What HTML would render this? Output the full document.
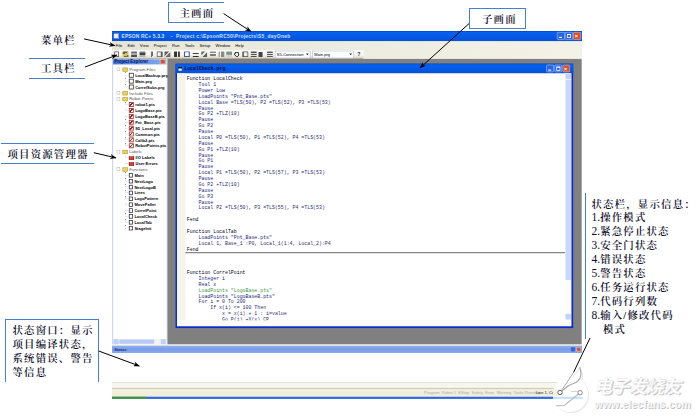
<!DOCTYPE html>
<html lang="zh-CN">
<head>
<meta charset="utf-8">
<title>EPSON RC+ 界面说明</title>
<style>
html,body{margin:0;padding:0;background:#fff;}
body{width:700px;height:420px;position:relative;overflow:hidden;font-family:"Liberation Sans","Noto Sans CJK SC",sans-serif;}
#clip{position:absolute;left:111.7px;top:31.4px;width:470px;height:367.5px;overflow:hidden;}
#ide{position:absolute;left:0;top:0;width:1280px;height:1002px;transform:scale(0.3672);transform-origin:0 0;background:#f3f1e6;font-size:11px;color:#000;overflow:hidden;}
#ide *{box-sizing:border-box;}
.abs{position:absolute;}
/* title */
.title{position:absolute;left:0;top:0;width:1280px;height:27.5px;background:linear-gradient(#0b3fc0,#0561ee 14%,#0458e4 60%,#0650d6);color:#d4e0fb;font:bold 13.33px "Liberation Sans",sans-serif;line-height:27px;}
.title .ico{position:absolute;left:4px;top:6px;width:15px;height:15px;background:#e8eefc;border:1px solid #123;}
.title .t1{position:absolute;left:26px;top:0;white-space:pre;letter-spacing:.4px;}
.title .t2{position:absolute;left:160px;top:0;white-space:pre;letter-spacing:.8px;}
.wb{position:absolute;top:3px;width:21px;height:21px;border:1px solid #fff;border-radius:3px;background:#2a66e0;}
.wb.x{background:#d8502c;}
.wb b{position:absolute;left:4px;top:12px;width:8px;height:3px;background:#fff;}
.wb.mx b{left:4px;top:4px;width:11px;height:11px;background:none;border:2px solid #fff;border-top-width:3px;}
.wb.x b{left:3px;top:2px;width:auto;height:auto;background:none;color:#fff;font:bold 15px "Liberation Sans",sans-serif;line-height:15px;}
/* menu */
.menu{position:absolute;left:0;top:27.5px;width:1280px;height:24px;background:linear-gradient(90deg,#e6e6d8,#f4f2e8);line-height:24px;white-space:pre;color:#000;}
.menu span{display:inline-block;padding:0 7px;font-size:11.3px}
.menu span:first-child{padding-left:10px}
.toolbar{position:absolute;left:0;top:51.5px;width:1280px;height:24.5px;background:linear-gradient(90deg,#e6e6d8,#f4f2e8);}
.strip{position:absolute;left:0;top:0;width:686px;height:24.5px;background:linear-gradient(#fcfbf8,#f6f4ee 55%,#e4e2d2 82%,#b4b29a 96%);border-radius:0 5px 5px 0;}
.tbi{position:absolute;top:4px;width:16px;height:15px;border-radius:1px;opacity:.85}
.combo{position:absolute;top:2px;height:20px;background:#fff;border:1px solid #7f9db9;line-height:18px;padding-left:4px;color:#000;white-space:pre;}
.combo:after{content:"";position:absolute;right:3px;top:6px;border:4px solid transparent;border-top:5px solid #333;}
/* explorer */
.exp{position:absolute;left:0;top:76px;width:152px;height:776.5px;background:#fff;border-left:3px solid #c9d6f3;border-right:4px solid #e6e9f3;}
.exp .cap{position:absolute;left:0;top:1px;width:145px;height:14px;background:linear-gradient(90deg,#3f74dc,#8aabee);color:#0a1560;font:bold 12px "Liberation Sans",sans-serif;line-height:14px;padding-left:3px;white-space:pre;}
.exp .cap i{position:absolute;right:3px;top:0px;width:14px;height:13px;background:#d8502c;border:1px solid #fff;border-radius:2px;}
.exp .tree{position:absolute;left:8px;top:21px;width:145px;overflow:hidden;}
.tr{position:relative;height:16px;line-height:16px;white-space:pre;color:#111;font-size:11.5px;}
.tr.r{color:#555;}
.tr.c{color:#000;font-weight:bold;font-size:11px;}
.pm{position:absolute;left:2px;top:3px;width:9px;height:9px;border:1px solid #999;background:#fff;}
.dl{position:absolute;left:25px;top:0;width:9px;height:8px;border-left:1px dotted #999;border-bottom:1px dotted #999;}
.ic{display:inline-block;width:14px;height:12px;margin-right:4px;vertical-align:-2px;}
.ic.fo,.ic.fc{background:#e8d060;border:1px solid #9a8420;height:11px;}
.ic.d{background:#fff;border:2px solid #222;width:13px;height:13px;}
.ic.p{background:linear-gradient(135deg,#fff 35%,#a01818 35% 60%,#fff 60%);border:2px solid #8a1c1c;width:13px;height:13px;}
.ic.l{background:#d04040;border:1px solid #600;height:9px;}
.ic.f{background:#fff;border:2px solid #223;width:11px;height:12px;}
.exp .hs{position:absolute;left:0;bottom:0;width:145px;height:14px;background:#f4f3ee;}
.exp .hs i{position:absolute;left:17px;top:1px;width:95px;height:12px;background:#b7caf5;border-radius:2px;}
.exp .hs b{position:absolute;top:0px;width:14px;height:14px;background:#c1d2f8;border-radius:2px;}
/* mdi */
.mdi{position:absolute;left:151px;top:76px;width:1128px;height:777px;background:#808080;}
.child{position:absolute;left:21.7px;top:12.8px;width:1083.3px;height:720.5px;background:#0a2cc8;}
.child .ct{position:absolute;left:0;top:0;width:100%;height:26.2px;background:linear-gradient(#0a54d8,#0561ee 25%,#0458e4 60%,#0650d6);color:#fff;font:bold 13px "Liberation Sans",sans-serif;line-height:30px;}
.child .ct .ico{position:absolute;left:7px;top:9px;width:11px;height:11px;background:#fff;border:1px solid #012;border-top:4px solid #012;}
.child .ct .t1{position:absolute;left:24px;top:0;white-space:pre;font:bold 13.33px "Liberation Mono",monospace;line-height:29px;color:#0a0a38;}
.child .ct .wb{top:3px;width:20px;height:20px;}
.child .body{position:absolute;left:4px;top:26.2px;right:4.5px;bottom:5px;background:#fff;overflow:hidden;}
.gut{position:absolute;left:0;top:0;width:23px;bottom:17px;background:#f5f4ea;}
.code{position:absolute;left:27px;top:8px;font:13.33px "Liberation Mono",monospace;}
.ln{height:16px;line-height:16px;white-space:pre;color:#000;}
.ln.f{color:#00001c;}
.ln.k{color:#24247c;}
.ln.m{color:#2c2c70;}
.ln.g{color:#3c9a3c;}
.sep{position:absolute;left:23px;right:17px;top:488px;height:2px;background:#333;}
.vs{position:absolute;right:0;top:0;width:17px;bottom:0;background:#fbfbf8;}
.vs i{position:absolute;left:1px;top:18px;width:15px;height:545px;background:#cad9fb;border-radius:2px;}
.vs b{position:absolute;left:1px;width:15px;height:15px;background:#c1d2f8;border-radius:2px;}
.hs2{position:absolute;left:0;right:17px;bottom:0;height:16px;background:#fbfbf7;}
/* status window */
.swt{position:absolute;left:0;top:857px;width:1280px;height:20px;background:linear-gradient(#8fb0f0,#7a9be8 50%,#88a8ee);color:#1a2f70;font:bold 11px "Liberation Sans",sans-serif;line-height:20px;padding-left:6px;}
.swt i{position:absolute;right:3px;top:4px;width:12px;height:12px;background:#d8502c;border:1px solid #fff;border-radius:2px;}
.swt b{position:absolute;right:19px;top:4px;width:11px;height:12px;background:#3a66d0;border-radius:2px;}
.sw{position:absolute;left:0;top:877px;width:1280px;height:79px;background:#fff;}
.sb0{position:absolute;left:0;top:956px;width:1280px;height:17px;background:#f6f6ee;border-top:2px solid #dcdcd4;}
.sbl{position:absolute;left:0;top:972px;width:1280px;height:3px;background:#cfcbb9;}
.sb{position:absolute;left:0;top:975px;width:1280px;height:21px;background:#f1efdc;color:#aaa;line-height:19px;white-space:pre;}
.sb span{position:absolute;top:0;}
.task{position:absolute;left:0;top:995.5px;width:1280px;height:6px;background:#2f6ae0;}
.task i{position:absolute;left:0;top:0;width:94px;height:6px;background:#3f9a3f;}
/* annotations */
.an{position:absolute;font-family:"Liberation Serif","Noto Serif CJK SC",serif;font-weight:600;font-size:10.4px;letter-spacing:1.2px;line-height:13.9px;color:#0c0c28;white-space:pre;}
.an .n{font-weight:400;letter-spacing:0;font-size:11.5px;}
.bl{position:absolute;background:#4a7fd0;}
#wm{position:absolute;left:0;top:0;}
</style>
</head>
<body>
<div id="clip"><div id="ide">
  <div class="title"><i class="ico"></i><span class="t1">EPSON RC+ 5.3.3</span><span class="t2">-  Project c:\EpsonRC50\Projects\S5_dayOneb</span>
    <div class="wb mn" style="left:1212px"><b></b></div><div class="wb mx" style="left:1234px"><b></b></div><div class="wb x" style="left:1256px"><b>×</b></div>
  </div>
  <div class="menu"><span>File</span><span>Edit</span><span>View</span><span>Project</span><span>Run</span><span>Tools</span><span>Setup</span><span>Window</span><span>Help</span></div>
  <div class="toolbar"><div class="strip"></div><i class="tbi" style="left:6.4px;background:#fff;border:2px solid #333;width:13px"></i><i class="tbi" style="left:29.3px;background:linear-gradient(160deg,#443 35%,#d8b838 35% 70%,#554 70%)"></i><i class="tbi" style="left:52.2px;background:linear-gradient(#555 30%,#999 30% 60%,#333 60%)"></i><i class="tbi" style="left:74.5px;background:linear-gradient(#667 35%,#222 35% 65%,#aaa 65%)"></i><i class="tbi" style="left:101.2px;background:linear-gradient(100deg,#fff0 35%,#555 35% 60%,#fff0 60%)"></i><i class="tbi" style="left:122.2px;background:#eee;border:2px solid #444;border-right-width:5px"></i><i class="tbi" style="left:143.1px;background:linear-gradient(135deg,#444 40%,#ccc 40% 60%,#555 60%)"></i><i class="tbi" style="left:169.3px;background:linear-gradient(90deg,#111 45%,#eee 45% 65%,#222 65%)"></i><i class="tbi" style="left:195.7px;background:#fff;border:3px solid #2a3f9a;border-top-width:2px"></i><i class="tbi" style="left:220.2px;background:linear-gradient(#fff0 20%,#222 20% 45%,#eee 45% 75%,#111 75%)"></i><i class="tbi" style="left:243.4px;background:linear-gradient(135deg,#555 30%,#ddd 30% 55%,#353 55%)"></i><i class="tbi" style="left:266.5px;background:linear-gradient(#777 25%,#eee 25% 50%,#666 50% 75%,#ddd 75%)"></i><i class="tbi" style="left:289.7px;background:linear-gradient(90deg,#999 30%,#eee 30% 50%,#777 50%)"></i><i class="tbi" style="left:311.4px;background:linear-gradient(#686 40%,#888 40% 70%,#ccc 70%)"></i><i class="tbi" style="left:331.6px;background:radial-gradient(#eee 35%,#222 40% 60%,#fff0 65%)"></i><i class="tbi" style="left:355.0px;background:#eee;border:2px solid #333;border-left-width:4px"></i><i class="tbi" style="left:378.4px;background:linear-gradient(#333 20%,#ddd 20% 40%,#333 40% 60%,#ddd 60% 80%,#333 80%)"></i><i class="tbi" style="left:398.6px;background:linear-gradient(#fff0 15%,#223 15% 90%,#fff0 90%);width:11px"></i><i class="tbi" style="left:422.0px;background:linear-gradient(#444 20%,#ddd 20% 40%,#444 40% 60%,#ddd 60% 80%,#444 80%)"></i>
    <div class="combo" style="left:444px;width:96px">S5-Connection</div>
    <div class="combo" style="left:546px;width:112px">Main.prg</div>
    <span class="abs" style="left:668px;top:3px;font:bold 14px 'Liberation Sans',sans-serif;color:#223">?</span>
  </div>
  <div class="exp">
    <div class="cap">Project Explorer<i></i></div>
    <div class="tree">
<div class="tr r" style="padding-left:18px"><u class="pm"></u><i class="ic fo"></i>Program Files</div>
<div class="tr c" style="padding-left:35px"><u class="dl"></u><i class="ic d"></i>LocalBackup.prg</div>
<div class="tr c" style="padding-left:35px"><u class="dl"></u><i class="ic d"></i>Main.prg</div>
<div class="tr c" style="padding-left:35px"><u class="dl"></u><i class="ic d"></i>CorrelSubs.prg</div>
<div class="tr r" style="padding-left:18px"><u class="pm"></u><i class="ic fc"></i>Include Files</div>
<div class="tr r" style="padding-left:18px"><u class="pm"></u><i class="ic fo"></i>Robot Points</div>
<div class="tr c" style="padding-left:35px"><u class="dl"></u><i class="ic p"></i>robot1.pts</div>
<div class="tr c" style="padding-left:35px"><u class="dl"></u><i class="ic p"></i>LogoBase.pts</div>
<div class="tr c" style="padding-left:35px"><u class="dl"></u><i class="ic p"></i>LogoBaseB.pts</div>
<div class="tr c" style="padding-left:35px"><u class="dl"></u><i class="ic p"></i>Pnt_Base.pts</div>
<div class="tr c" style="padding-left:35px"><u class="dl"></u><i class="ic p"></i>S5_Local.pts</div>
<div class="tr c" style="padding-left:35px"><u class="dl"></u><i class="ic p"></i>Common.pts</div>
<div class="tr c" style="padding-left:35px"><u class="dl"></u><i class="ic p"></i>Calib2.pts</div>
<div class="tr c" style="padding-left:35px"><u class="dl"></u><i class="ic p"></i>RobotPoints.pts</div>
<div class="tr r" style="padding-left:18px"><u class="pm"></u><i class="ic fo"></i>Labels</div>
<div class="tr c" style="padding-left:35px"><u class="dl"></u><i class="ic l"></i>I/O Labels</div>
<div class="tr c" style="padding-left:35px"><u class="dl"></u><i class="ic l"></i>User Errors</div>
<div class="tr r" style="padding-left:18px"><u class="pm"></u><i class="ic fo"></i>Functions</div>
<div class="tr c" style="padding-left:35px"><u class="dl"></u><i class="ic f"></i>Main</div>
<div class="tr c" style="padding-left:35px"><u class="dl"></u><i class="ic f"></i>NextLogo</div>
<div class="tr c" style="padding-left:35px"><u class="dl"></u><i class="ic f"></i>NextLogoB</div>
<div class="tr c" style="padding-left:35px"><u class="dl"></u><i class="ic f"></i>Lines</div>
<div class="tr c" style="padding-left:35px"><u class="dl"></u><i class="ic f"></i>LogoPattern</div>
<div class="tr c" style="padding-left:35px"><u class="dl"></u><i class="ic f"></i>MovePallet</div>
<div class="tr c" style="padding-left:35px"><u class="dl"></u><i class="ic f"></i>CorrelPoint</div>
<div class="tr c" style="padding-left:35px"><u class="dl"></u><i class="ic f"></i>LocalCheck</div>
<div class="tr c" style="padding-left:35px"><u class="dl"></u><i class="ic f"></i>LocalTab</div>
<div class="tr c" style="padding-left:35px"><u class="dl"></u><i class="ic f"></i>StageInit</div>

    </div>
    <div class="hs"><b style="left:1px"></b><i></i><b style="right:1px"></b></div>
  </div>
  <div class="mdi">
    <div class="child">
      <div class="ct"><i class="ico"></i><span class="t1">LocalCheck.prg</span>
        <div class="wb mn" style="left:1010px"><b></b></div><div class="wb mx" style="left:1032px"><b></b></div><div class="wb x" style="left:1054px"><b>×</b></div>
      </div>
      <div class="body">
        <div class="gut"></div>
        <div class="code">
<div class="ln f" style="padding-left:0px">Function LocalCheck</div>
<div class="ln k" style="padding-left:32px">Tool 1</div>
<div class="ln k" style="padding-left:32px">Power Low</div>
<div class="ln k" style="padding-left:32px">LoadPoints "Pnt_Base.pts"</div>
<div class="ln m" style="padding-left:32px">Local Base =TLS(50), P2 =TLS(52), P3 =TLS(53)</div>
<div class="ln k" style="padding-left:32px">Pause</div>
<div class="ln m" style="padding-left:32px">Go P2 +TLZ(10)</div>
<div class="ln k" style="padding-left:32px">Pause</div>
<div class="ln m" style="padding-left:32px">Go P2</div>
<div class="ln k" style="padding-left:32px">Pause</div>
<div class="ln m" style="padding-left:32px">Local P0 =TLS(50), P1 =TLS(52), P4 =TLS(53)</div>
<div class="ln k" style="padding-left:32px">Pause</div>
<div class="ln m" style="padding-left:32px">Go P1 +TLZ(10)</div>
<div class="ln k" style="padding-left:32px">Pause</div>
<div class="ln m" style="padding-left:32px">Go P1</div>
<div class="ln k" style="padding-left:32px">Pause</div>
<div class="ln m" style="padding-left:32px">Local P1 =TLS(50), P2 =TLS(57), P3 =TLS(53)</div>
<div class="ln k" style="padding-left:32px">Pause</div>
<div class="ln m" style="padding-left:32px">Go P2 +TLZ(10)</div>
<div class="ln k" style="padding-left:32px">Pause</div>
<div class="ln m" style="padding-left:32px">Go P3</div>
<div class="ln k" style="padding-left:32px">Pause</div>
<div class="ln m" style="padding-left:32px">Local P2 =TLS(50), P3 =TLS(55), P4 =TLS(53)</div>
<div class="ln " style="padding-left:0px">&nbsp;</div>
<div class="ln f" style="padding-left:0px">Fend</div>
<div class="ln " style="padding-left:0px">&nbsp;</div>
<div class="ln f" style="padding-left:0px">Function LocalTab</div>
<div class="ln k" style="padding-left:32px">LoadPoints "Pnt_Base.pts"</div>
<div class="ln m" style="padding-left:32px">Local 1, Base_1 :P0, Local_1(1:4, Local_2):P4</div>
<div class="ln f" style="padding-left:0px">Fend</div>
<div class="ln " style="padding-left:0px">&nbsp;</div>
<div class="ln " style="padding-left:0px">&nbsp;</div>
<div class="ln " style="padding-left:0px">&nbsp;</div>
<div class="ln f" style="padding-left:0px">Function CorrelPoint</div>
<div class="ln k" style="padding-left:32px">Integer i</div>
<div class="ln k" style="padding-left:32px">Real x</div>
<div class="ln g" style="padding-left:32px">LoadPoints "LogoBase.pts"</div>
<div class="ln k" style="padding-left:32px">LoadPoints "LogoBaseB.pts"</div>
<div class="ln m" style="padding-left:32px">For i = 0 To 200</div>
<div class="ln m" style="padding-left:64px">If x(i) &lt;= 100 Then</div>
<div class="ln m" style="padding-left:96px">x = x(i) + 1 : i=value</div>
<div class="ln m" style="padding-left:96px">Go P(i) +X(x) CP</div>

        </div>
        <div class="sep"></div>
        <div class="vs"><b style="top:1px"></b><i></i><b style="bottom:18px"></b></div>
        <div class="hs2"></div>
      </div>
    </div>
  </div>
  <div class="swt">Status<b></b><i></i></div>
  <div class="sw"></div>
  <div class="sb0"></div><div class="sbl"></div>
  <div class="sb"><span style="left:850px">Program  Robot 1  EStop  Safety  Error  Warning  Tasks Running</span><span style="left:1154px;color:#222">Line 1, Col 1</span></div>
  <div class="task"><i></i></div>
</div></div>

<!-- blue guide lines -->
<div class="bl" style="left:168px;top:2px;width:1px;height:21px"></div>
<div class="bl" style="left:168px;top:2px;width:56px;height:1px"></div>
<div class="bl" style="left:168px;top:22px;width:56px;height:1px"></div>
<div class="bl" style="left:29px;top:58px;width:56px;height:1px"></div>
<div class="bl" style="left:29px;top:78px;width:56px;height:1px"></div>
<div class="bl" style="left:1px;top:143px;width:93px;height:1px"></div>
<div class="bl" style="left:1px;top:163px;width:93px;height:1px"></div>
<div class="bl" style="left:469px;top:8px;width:57px;height:1px"></div>
<div class="bl" style="left:469px;top:28px;width:57px;height:1px"></div>
<div class="bl" style="left:469px;top:8px;width:1px;height:21px"></div>
<div class="bl" style="left:525px;top:8px;width:1px;height:21px"></div>
<div class="bl" style="left:5px;top:319px;width:94px;height:1px"></div>
<div class="bl" style="left:5px;top:319px;width:1px;height:63px"></div>
<div class="bl" style="left:98px;top:319px;width:1px;height:63px"></div>
<div class="bl" style="left:585px;top:193px;width:1px;height:146px"></div>

<!-- labels -->
<div class="an" style="left:179.5px;top:6.5px">主画面</div>
<div class="an" style="left:41px;top:33.5px">菜单栏</div>
<div class="an" style="left:41px;top:62px">工具栏</div>
<div class="an" style="left:7.5px;top:147.5px">项目资源管理器</div>
<div class="an" style="left:482px;top:13px">子画面</div>
<div class="an" style="left:12.5px;top:324.3px">状态窗口：显示
项目编译状态，
系统错误、警告
等信息</div>
<div class="an" style="left:591.5px;top:197.5px">状态栏，显示信息：
<span class="n">1.</span>操作模式
<span class="n">2.</span>紧急停止状态
<span class="n">3.</span>安全门状态
<span class="n">4.</span>错误状态
<span class="n">5.</span>警告状态
<span class="n">6.</span>任务运行状态
<span class="n">7.</span>代码行列数
<span class="n">8.</span>输入/修改代码
   模式</div>

<!-- arrows + watermark -->
<svg id="wm" width="700" height="420" viewBox="0 0 700 420">
  <defs>
    <marker id="ah" markerWidth="7" markerHeight="5" refX="6" refY="2.5" orient="auto" markerUnits="userSpaceOnUse"><path d="M0,0 L6.5,2.5 L0,5 L2,2.5 z" fill="#000"/></marker>
  </defs>
  <!-- watermark logo -->
  <g>
    <circle cx="571.2" cy="395.2" r="17.8" fill="#e6e6e6"/>
    <path d="M566 380 C572 378 577 374 579.7 366.5 C582.5 372 583 378 581.5 384 Z" fill="#fff" stroke="#e2e2e2" stroke-width="1"/>
    <circle cx="570.5" cy="394.5" r="17.6" fill="#fff"/>
    <rect x="553.5" y="396.8" width="29" height="2" fill="#bfe0ff"/>
    <rect x="553" y="388.5" width="6" height="8" fill="#f4f3ea"/>
    <path d="M579.7 367.5 C581.3 372 581.6 377.5 578 381 C574.5 384 569 384.5 565.5 388 L561.8 391.2" fill="none" stroke="#a9a9a9" stroke-width="1.1"/>
    <path d="M580 392.8 L564.6 405.2 L556 405.8" fill="none" stroke="#b9b9b9" stroke-width="1.1"/>
    <path d="M571 391.4 L577.6 391.4" fill="none" stroke="#d0d0d0" stroke-width="1"/>
    <circle cx="560" cy="392.5" r="2.2" fill="#fff" stroke="#666" stroke-width="1"/>
    <circle cx="580.1" cy="392.7" r="2.2" fill="#fff" stroke="#8a8a8a" stroke-width="1"/>
  </g>
  <g font-family="'Liberation Sans','Noto Sans CJK SC',sans-serif" font-weight="700" font-style="italic">
    <text x="595.2" y="394.2" font-size="18" fill="#c6c6c6" textLength="87">电子发烧友</text>
    <text x="594" y="393" font-size="18" fill="#fff" stroke="#e4e4e4" stroke-width=".4" textLength="87">电子发烧友</text>
    <text x="595.6" y="408.6" font-size="10.5" fill="#c2c2c2" textLength="96" font-style="normal">www.elecfans.com</text>
    <text x="594.6" y="407.8" font-size="10.5" fill="#f6f6f6" textLength="96" font-style="normal">www.elecfans.com</text>
  </g>
  <g stroke="#000" stroke-width="1" fill="none">
    <line x1="223.6" y1="13.6" x2="251" y2="31.6" marker-end="url(#ah)"/>
    <line x1="84" y1="38.9" x2="115" y2="45.7" marker-end="url(#ah)"/>
    <line x1="85" y1="67" x2="117" y2="55" marker-end="url(#ah)"/>
    <line x1="93.8" y1="152.7" x2="116" y2="157.9" marker-end="url(#ah)"/>
    <line x1="469" y1="23.6" x2="420" y2="68" marker-end="url(#ah)"/>
    <line x1="98.7" y1="351" x2="139.4" y2="366" marker-end="url(#ah)"/>
    <line x1="590" y1="338" x2="573.5" y2="372.5"/><line x1="573.5" y1="372.5" x2="561.5" y2="390.6" stroke="#8f8f8f" stroke-width=".8"/>
  </g>
</svg>
</body>
</html>
